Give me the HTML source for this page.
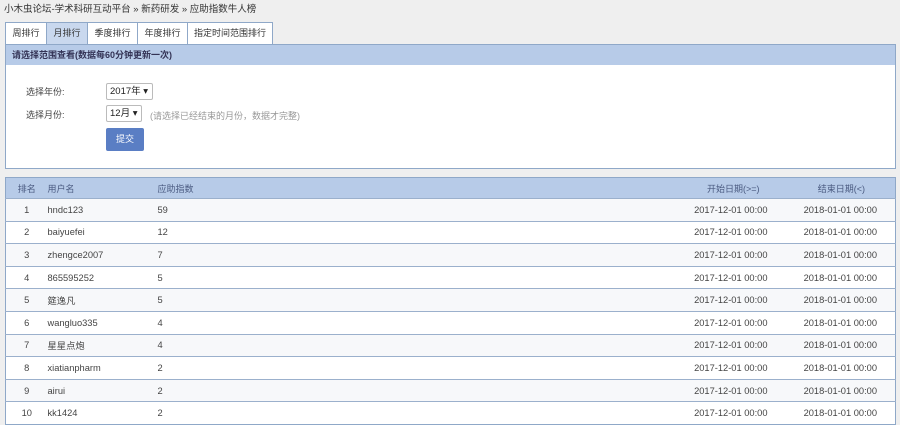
<!DOCTYPE html>
<html><head><meta charset="utf-8"><style>
*{margin:0;padding:0;box-sizing:border-box}
body{width:900px;height:425px;overflow:hidden;background:#efefef;font-family:"Liberation Sans","Noto Sans CJK SC",sans-serif;font-size:9px;color:#444;position:relative}
.crumb{position:absolute;left:4px;top:1px;font-size:9.5px;color:#333}
.tabs{position:absolute;left:5px;top:22px;height:23px;display:flex}
.tab{height:23px;border:1px solid #8fa8c8;border-bottom:none;background:#fff;line-height:21px;text-align:center;font-size:9px;color:#333;margin-right:-1px}
.tab.a{background:#c9d8ee}
.panel{position:absolute;left:5px;top:44px;width:891px;height:125px;background:#fff;border:1px solid #8fa8c8}
.ph{height:20px;background:#b7cbe8;line-height:20px;padding-left:6px;font-weight:bold;color:#335;font-size:9px}
.lbl{position:absolute;left:20px;font-size:9px;color:#444}
.sel{position:absolute;left:100px;height:17px;border:1px solid #bbb;border-radius:2px;background:#fff;font-size:9.5px;line-height:15px;padding-left:3px;color:#222}
.btn{position:absolute;left:100px;top:83px;width:38px;height:23px;background:#5a7ec4;border-radius:2px;color:#fff;text-align:center;line-height:23px;font-size:9px}
.hint{position:absolute;left:144px;top:64px;color:#999;font-size:9px}
table{position:absolute;left:5px;top:177px;width:891px;border-collapse:collapse;background:#fff;border:1px solid #8fa8c8}
th{height:21px;background:#b7cbe8;font-weight:normal;color:#4a5a80;text-align:left;font-size:9px}
td{height:22.6px;border-top:1px solid #9bb0cc;font-size:9.3px;color:#444}
tr:nth-child(even) td{background:#f7f8fa}
.c{text-align:center}.r{text-align:right;padding-right:18px}
</style></head><body>
<div class="crumb">小木虫论坛-学术科研互动平台 » 新药研发 » 应助指数牛人榜</div>
<div class="tabs">
<div class="tab" style="width:42px">周排行</div>
<div class="tab a" style="width:42px">月排行</div>
<div class="tab" style="width:51px">季度排行</div>
<div class="tab" style="width:51px">年度排行</div>
<div class="tab" style="width:86px">指定时间范围排行</div>
</div>
<div class="panel">
<div class="ph">请选择范围查看(数据每60分钟更新一次)</div>
<div class="lbl" style="top:40px">选择年份:</div>
<div class="sel" style="top:38px;width:47px">2017年 ▾</div>
<div class="lbl" style="top:63px">选择月份:</div>
<div class="sel" style="top:60px;width:36px">12月 ▾</div>
<div class="hint">(请选择已经结束的月份，数据才完整)</div>
<div class="btn">提交</div>
</div>
<table>
<tr><th class="c" style="width:42px">排名</th><th style="width:110px">用户名</th><th>应助指数</th><th class="r" style="width:130px;padding-right:26px">开始日期(&gt;=)</th><th class="r" style="width:110px;padding-right:30px">结束日期(&lt;)</th></tr>
<tr><td class="c">1</td><td>hndc123</td><td>59</td><td class="r">2017-12-01 00:00</td><td class="r">2018-01-01 00:00</td></tr>
<tr><td class="c">2</td><td>baiyuefei</td><td>12</td><td class="r">2017-12-01 00:00</td><td class="r">2018-01-01 00:00</td></tr>
<tr><td class="c">3</td><td>zhengce2007</td><td>7</td><td class="r">2017-12-01 00:00</td><td class="r">2018-01-01 00:00</td></tr>
<tr><td class="c">4</td><td>865595252</td><td>5</td><td class="r">2017-12-01 00:00</td><td class="r">2018-01-01 00:00</td></tr>
<tr><td class="c">5</td><td>筵逸凡</td><td>5</td><td class="r">2017-12-01 00:00</td><td class="r">2018-01-01 00:00</td></tr>
<tr><td class="c">6</td><td>wangluo335</td><td>4</td><td class="r">2017-12-01 00:00</td><td class="r">2018-01-01 00:00</td></tr>
<tr><td class="c">7</td><td>星星点炮</td><td>4</td><td class="r">2017-12-01 00:00</td><td class="r">2018-01-01 00:00</td></tr>
<tr><td class="c">8</td><td>xiatianpharm</td><td>2</td><td class="r">2017-12-01 00:00</td><td class="r">2018-01-01 00:00</td></tr>
<tr><td class="c">9</td><td>airui</td><td>2</td><td class="r">2017-12-01 00:00</td><td class="r">2018-01-01 00:00</td></tr>
<tr><td class="c">10</td><td>kk1424</td><td>2</td><td class="r">2017-12-01 00:00</td><td class="r">2018-01-01 00:00</td></tr>
</table>
</body></html>
